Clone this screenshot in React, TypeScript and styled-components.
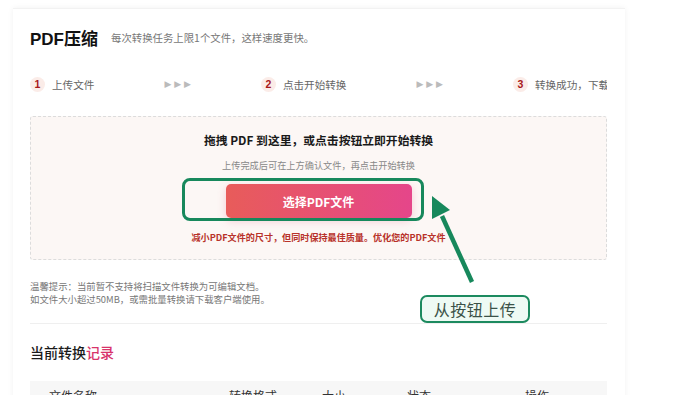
import React from 'react';
import styled, { createGlobalStyle } from 'styled-components';

const GlobalStyle = createGlobalStyle`
  html, body {
    margin: 0;
    padding: 0;
    background: #ffffff;
  }
  body {
    font-family: "Noto Sans CJK SC", "Noto Sans", "Liberation Sans", sans-serif;
    color: #222;
  }
`;

const steps = [
  { n: 1, label: '上传文件' },
  { n: 2, label: '点击开始转换' },
  { n: 3, label: '转换成功，下载文件' },
];

const columns = [
  { label: '文件名称', width: 180 },
  { label: '转换格式', width: 93 },
  { label: '大小', width: 85 },
  { label: '状态', width: 118 },
  { label: '操作', width: 70 },
];

const App = () => {
  return (
    <Page>
      <GlobalStyle />
      <Card>
        <Header>
          <Title>PDF压缩</Title>
          <Subtitle>每次转换任务上限1个文件，这样速度更快。</Subtitle>
        </Header>

        <Steps>
          {steps.map((s, i) => (
            <React.Fragment key={s.n}>
              {i > 0 && <StepArrows>▶ ▶ ▶</StepArrows>}
              <Step>
                <StepBadge>{s.n}</StepBadge>
                <StepLabel>{s.label}</StepLabel>
              </Step>
            </React.Fragment>
          ))}
        </Steps>

        <DropZone>
          <DropTitle>拖拽 PDF 到这里，或点击按钮立即开始转换</DropTitle>
          <DropHint>上传完成后可在上方确认文件，再点击开始转换</DropHint>
          <SelectButton>选择PDF文件</SelectButton>
          <DropNote>减小PDF文件的尺寸，但同时保持最佳质量。优化您的PDF文件</DropNote>
        </DropZone>

        <Tips>
          温馨提示：当前暂不支持将扫描文件转换为可编辑文档。
          <br />
          如文件大小超过50MB，或需批量转换请下载客户端使用。
        </Tips>

        <Divider />

        <RecordTitle>
          当前转换<Accent>记录</Accent>
        </RecordTitle>

        <TableHead>
          {columns.map((c) => (
            <HeadCell key={c.label} $width={c.width}>
              {c.label}
            </HeadCell>
          ))}
        </TableHead>
      </Card>

      <HighlightBox />
      <Arrow width="60" height="100" viewBox="0 0 60 100">
        <line x1="43" y1="90" x2="13" y2="24" stroke="#17885c" strokeWidth="4.5" />
        <polygon points="3,4 21,18 3,27" fill="#17885c" />
      </Arrow>
      <CalloutLabel>从按钮上传</CalloutLabel>
    </Page>
  );
};

const Page = styled.div`
  position: relative;
  width: 700px;
  height: 395px;
  overflow: hidden;
  padding-top: 8px;
  box-sizing: border-box;
`;

const Card = styled.div`
  margin-left: 13px;
  width: 612px;
  min-height: 420px;
  box-sizing: border-box;
  padding: 16px 18px 0 17px;
  background: #fff;
  box-shadow: 0 0 6px rgba(0, 0, 0, 0.06);
  border-top: 1px solid #f2f2f2;
`;

const Header = styled.div`
  display: flex;
  align-items: center;
  height: 24px;
`;

const Title = styled.div`
  font-size: 17px;
  font-weight: 700;
  color: #111;
  font-family: "Liberation Sans", "Noto Sans CJK SC", sans-serif;
`;

const Subtitle = styled.div`
  margin-left: 13px;
  font-size: 10.4px;
  color: #777;
`;

const Steps = styled.div`
  display: flex;
  align-items: center;
  gap: 70px;
  height: 20px;
  margin-top: 25px;
  white-space: nowrap;
  overflow: hidden;
`;

const Step = styled.div`
  display: flex;
  align-items: center;
  gap: 7px;
  flex-shrink: 0;
`;

const StepBadge = styled.span`
  width: 15px;
  height: 15px;
  border-radius: 50%;
  background: #fbece8;
  color: #a8181a;
  font-size: 10.5px;
  font-weight: 700;
  display: flex;
  align-items: center;
  justify-content: center;
  font-family: "Liberation Sans", sans-serif;
`;

const StepLabel = styled.span`
  font-size: 10.6px;
  color: #666;
`;

const StepArrows = styled.span`
  font-size: 9px;
  color: #bbb;
  flex-shrink: 0;
  font-family: "DejaVu Sans", sans-serif;
`;

const DropZone = styled.div`
  margin-top: 22px;
  height: 144px;
  box-sizing: border-box;
  border: 1px dashed #dcdcdc;
  border-radius: 3px;
  background: #fcf7f5;
  display: flex;
  flex-direction: column;
  align-items: center;
  padding-top: 13px;
`;

const DropTitle = styled.div`
  font-size: 11.8px;
  font-weight: 700;
  color: #1a1a1a;
  line-height: 20px;
`;

const DropHint = styled.div`
  margin-top: 7px;
  font-size: 9.2px;
  color: #888;
  line-height: 16px;
`;

const SelectButton = styled.button`
  margin-top: 11px;
  width: 186px;
  height: 34px;
  border: none;
  border-radius: 5px;
  background: linear-gradient(90deg, #e85c5a 0%, #e5468a 100%);
  box-shadow: 0 3px 8px rgba(229, 80, 120, 0.25);
  color: #fff;
  font-size: 12px;
  font-weight: 700;
  font-family: "Noto Sans CJK SC", sans-serif;
  cursor: pointer;
`;

const DropNote = styled.div`
  margin-top: 12px;
  font-size: 9.1px;
  font-weight: 700;
  color: #b8322a;
  line-height: 14px;
`;

const Tips = styled.div`
  margin-top: 20px;
  font-size: 9.4px;
  line-height: 13px;
  color: #777;
`;

const Divider = styled.div`
  margin-top: 17px;
  height: 1px;
  background: #efefef;
`;

const RecordTitle = styled.div`
  margin-top: 17px;
  font-size: 14px;
  line-height: 22px;
  font-weight: 500;
  color: #1a1a1a;
`;

const Accent = styled.span`
  color: #d8336a;
`;

const TableHead = styled.div`
  margin-top: 18px;
  height: 36px;
  background: #f7f7f7;
  display: flex;
  align-items: flex-start;
  padding: 7px 0 0 19px;
  box-sizing: border-box;
`;

const HeadCell = styled.div<{ $width: number }>`
  width: ${(p) => p.$width}px;
  flex-shrink: 0;
  font-size: 12px;
  color: #333;
  line-height: 16px;
`;

const HighlightBox = styled.div`
  position: absolute;
  left: 182px;
  top: 178px;
  width: 242px;
  height: 43px;
  box-sizing: border-box;
  border: 3px solid #17885c;
  border-radius: 8px;
`;

const Arrow = styled.svg`
  position: absolute;
  left: 429px;
  top: 192px;
`;

const CalloutLabel = styled.div`
  position: absolute;
  left: 420px;
  top: 295px;
  width: 110px;
  height: 28px;
  box-sizing: border-box;
  border: 2px solid #1c8a5f;
  border-radius: 7px;
  background: #eefaf4;
  color: #3b5248;
  font-size: 16px;
  display: flex;
  align-items: center;
  justify-content: center;
  letter-spacing: 0.5px;
`;

export default App;
